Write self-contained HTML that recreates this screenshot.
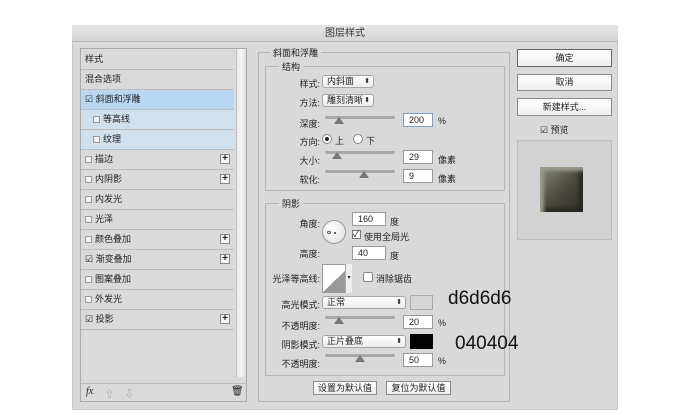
<!DOCTYPE html>
<html><head><meta charset="utf-8"><style>
*{margin:0;padding:0;box-sizing:border-box}
body{width:690px;height:420px;background:#fff;position:relative;overflow:hidden;font-family:"Liberation Sans","Noto Sans CJK SC",sans-serif;font-size:9px;color:#222}
.a{position:absolute}
.dlg{left:72px;top:25px;width:546px;height:385px;background:#d9d9d9;border:1px solid #c8c8c8}
.title{left:72px;top:25px;width:546px;height:17px;background:linear-gradient(#e6e6e6,#d4d4d4);border-bottom:1px solid #b8b8b8;text-align:center;line-height:17px;font-size:10px;color:#333}
.lp{left:80px;top:48px;width:167px;height:354px;background:#dadada;border:1px solid #aaa}
.it{position:absolute;left:0;width:153px;height:20px;border-bottom:1px solid #bcbcbc;line-height:19px;padding-left:4px;font-size:9px}
.cb{display:inline-block;width:7px;height:7px;border:1px solid #999;background:#f2f2f2;vertical-align:-1px;margin-right:3px}
.plus{position:absolute;right:4px;top:4px;width:10px;height:10px;border:1px solid #888;background:#f4f4f4;font-size:10px;line-height:8px;text-align:center;font-weight:bold}
.grp{border:1px solid #b5b5b5}
.lbl{position:absolute;background:#d9d9d9;padding:0 3px;font-size:9px}
.in{position:absolute;background:#fff;border:1px solid #9a9a9a;height:14px;line-height:12px;padding-left:5px;font-size:9px}
.sel{position:absolute;background:linear-gradient(#fff,#ececec);border:1px solid #a5a5a5;border-radius:3px;height:13px;line-height:11px;padding-left:4px;font-size:9px}
.sel:after{content:"⬍";position:absolute;right:3px;top:0;font-size:7px}
.sl{position:absolute;height:3px;background:#a9a9a9;border-radius:2px}
.th{position:absolute;width:0;height:0;border-left:5px solid transparent;border-right:5px solid transparent;border-bottom:7px solid #777}
.btn{position:absolute;background:linear-gradient(#fff,#eee);border:1px solid #8c8c8c;text-align:center;font-size:9px}
.r{text-align:right;position:absolute;font-size:9px}
</style></head><body>
<div class="a dlg"></div>
<div class="a title">图层样式</div>

<div class="a lp">
 <div class="it" style="top:1px">样式</div>
 <div class="it" style="top:21px">混合选项</div>
 <div class="it" style="top:41px;background:#b9d7f2">☑ 斜面和浮雕</div>
 <div class="it" style="top:61px;background:#cfe0ee;padding-left:12px"><span class="cb"></span>等高线</div>
 <div class="it" style="top:81px;background:#cfe0ee;padding-left:12px"><span class="cb"></span>纹理</div>
 <div class="it" style="top:101px"><span class="cb"></span>描边<span class="plus">+</span></div>
 <div class="it" style="top:121px"><span class="cb"></span>内阴影<span class="plus">+</span></div>
 <div class="it" style="top:141px"><span class="cb"></span>内发光</div>
 <div class="it" style="top:161px"><span class="cb"></span>光泽</div>
 <div class="it" style="top:181px"><span class="cb"></span>颜色叠加<span class="plus">+</span></div>
 <div class="it" style="top:201px">☑ 渐变叠加<span class="plus">+</span></div>
 <div class="it" style="top:221px"><span class="cb"></span>图案叠加</div>
 <div class="it" style="top:241px"><span class="cb"></span>外发光</div>
 <div class="it" style="top:261px">☑ 投影<span class="plus">+</span></div>
 <div class="a" style="left:155px;top:0;width:10px;height:328px;background:linear-gradient(90deg,#e8e8e8,#f7f7f7,#ddd);border-left:1px solid #c4c4c4"></div>
 <div class="a" style="left:0;top:334px;width:165px;border-top:1px solid #bbb"></div>
 <div class="a" style="left:5px;top:337px;font-style:italic;font-family:'Liberation Serif',serif;font-size:10px">fx<span style="font-size:6px">.</span></div>
 <div class="a" style="left:24px;top:338px;color:#999">⇧</div>
 <div class="a" style="left:44px;top:338px;color:#999">⇩</div>
 <div class="a" style="left:150px;top:337px;font-size:10px">🗑</div>
</div>

<div class="a grp" style="left:258px;top:52px;width:252px;height:350px"></div>
<div class="lbl" style="left:270px;top:46px">斜面和浮雕</div>
<div class="a grp" style="left:265px;top:66px;width:240px;height:125px"></div>
<div class="lbl" style="left:279px;top:60px">结构</div>
<div class="r" style="left:290px;top:77px;width:30px">样式:</div>
<div class="sel" style="left:322px;top:75px;width:52px">内斜面</div>
<div class="r" style="left:290px;top:96px;width:30px">方法:</div>
<div class="sel" style="left:322px;top:94px;width:52px">雕刻清晰</div>
<div class="r" style="left:290px;top:117px;width:30px">深度:</div>
<div class="sl" style="left:325px;top:116px;width:70px"></div><div class="th" style="left:334px;top:117px"></div>
<div class="in" style="left:403px;top:113px;width:30px;border-color:#7aa0c8">200</div><div class="a" style="left:438px;top:116px">%</div>
<div class="r" style="left:290px;top:135px;width:30px">方向:</div>
<div class="a" style="left:322px;top:134px;width:10px;height:10px;border-radius:50%;border:1px solid #888;background:#fff"><div class="a" style="left:2px;top:2px;width:4px;height:4px;border-radius:50%;background:#222"></div></div>
<div class="a" style="left:335px;top:134px">上</div>
<div class="a" style="left:353px;top:134px;width:10px;height:10px;border-radius:50%;border:1px solid #888;background:#fff"></div>
<div class="a" style="left:366px;top:134px">下</div>
<div class="r" style="left:290px;top:154px;width:30px">大小:</div>
<div class="sl" style="left:325px;top:151px;width:70px"></div><div class="th" style="left:332px;top:152px"></div>
<div class="in" style="left:403px;top:150px;width:30px">29</div><div class="a" style="left:438px;top:153px">像素</div>
<div class="r" style="left:290px;top:173px;width:30px">软化:</div>
<div class="sl" style="left:325px;top:170px;width:70px"></div><div class="th" style="left:359px;top:171px"></div>
<div class="in" style="left:403px;top:169px;width:30px">9</div><div class="a" style="left:438px;top:172px">像素</div>

<div class="a grp" style="left:265px;top:203px;width:240px;height:173px"></div>
<div class="lbl" style="left:279px;top:197px">阴影</div>
<div class="r" style="left:290px;top:217px;width:30px">角度:</div>
<div class="a" style="left:322px;top:220px;width:24px;height:24px;border-radius:50%;border:1px solid #999;background:radial-gradient(circle at 40% 35%,#fff,#ddd)"><div class="a" style="left:4px;top:10px;width:4px;height:3px;border:1px solid #555;border-radius:50%"></div><div class="a" style="left:11px;top:11px;width:2px;height:2px;background:#333;border-radius:50%"></div></div>
<div class="in" style="left:352px;top:212px;width:34px">160</div><div class="a" style="left:390px;top:215px">度</div>
<div class="a" style="left:352px;top:230px;width:9px;height:9px;border:1px solid #777;background:#fff;font-size:9px;line-height:7px">✓</div><div class="a" style="left:364px;top:230px">使用全局光</div>
<div class="r" style="left:290px;top:247px;width:30px">高度:</div>
<div class="in" style="left:352px;top:246px;width:34px">40</div><div class="a" style="left:390px;top:249px">度</div>
<div class="r" style="left:262px;top:272px;width:58px">光泽等高线:</div>
<div class="a" style="left:322px;top:264px;width:30px;height:29px;border:1px solid #999;background:linear-gradient(to bottom right,#fff 50%,#9a9a9a 50%)"></div>
<div class="a" style="left:345px;top:264px;width:7px;height:29px;background:#eee;border-left:1px solid #aaa;font-size:6px;text-align:center;line-height:29px">▾</div>
<div class="a" style="left:363px;top:272px;width:10px;height:10px;border:1px solid #888;border-radius:2px;background:#fff"></div><div class="a" style="left:376px;top:272px">消除锯齿</div>
<div class="r" style="left:270px;top:298px;width:50px">高光模式:</div>
<div class="sel" style="left:322px;top:296px;width:84px">正常</div>
<div class="a" style="left:410px;top:295px;width:23px;height:15px;background:#d6d6d6;border:1px solid #aaa"></div>
<div class="r" style="left:270px;top:319px;width:50px">不透明度:</div>
<div class="sl" style="left:325px;top:316px;width:70px"></div><div class="th" style="left:334px;top:317px"></div>
<div class="in" style="left:403px;top:315px;width:30px">20</div><div class="a" style="left:438px;top:318px">%</div>
<div class="r" style="left:270px;top:338px;width:50px">阴影模式:</div>
<div class="sel" style="left:322px;top:335px;width:84px">正片叠底</div>
<div class="a" style="left:410px;top:334px;width:23px;height:15px;background:#040404"></div>
<div class="r" style="left:270px;top:357px;width:50px">不透明度:</div>
<div class="sl" style="left:325px;top:354px;width:70px"></div><div class="th" style="left:355px;top:355px"></div>
<div class="in" style="left:403px;top:353px;width:30px">50</div><div class="a" style="left:438px;top:356px">%</div>
<div class="btn" style="left:313px;top:381px;width:64px;height:14px;line-height:12px">设置为默认值</div>
<div class="btn" style="left:386px;top:381px;width:65px;height:14px;line-height:12px">复位为默认值</div>

<div class="a" style="left:448px;top:288px;font-size:19px;color:#111">d6d6d6</div>
<div class="a" style="left:455px;top:333px;font-size:19px;color:#111">040404</div>

<div class="btn" style="left:517px;top:49px;width:95px;height:18px;line-height:16px;border-color:#666">确定</div>
<div class="btn" style="left:517px;top:74px;width:95px;height:17px;line-height:15px">取消</div>
<div class="btn" style="left:517px;top:98px;width:95px;height:18px;line-height:16px">新建样式...</div>
<div class="a" style="left:540px;top:123px">☑ 预览</div>
<div class="a" style="left:517px;top:140px;width:95px;height:100px;background:#d2d2d2;border:1px solid #bdbdbd"></div>
<div class="a" style="left:540px;top:167px;width:43px;height:45px;background:linear-gradient(135deg,#8a8a78,#4c4c40 50%,#2e2e28);box-shadow:inset 4px 4px 3px #999a88,inset -4px -4px 3px #2a2a22"></div>
</body></html>
